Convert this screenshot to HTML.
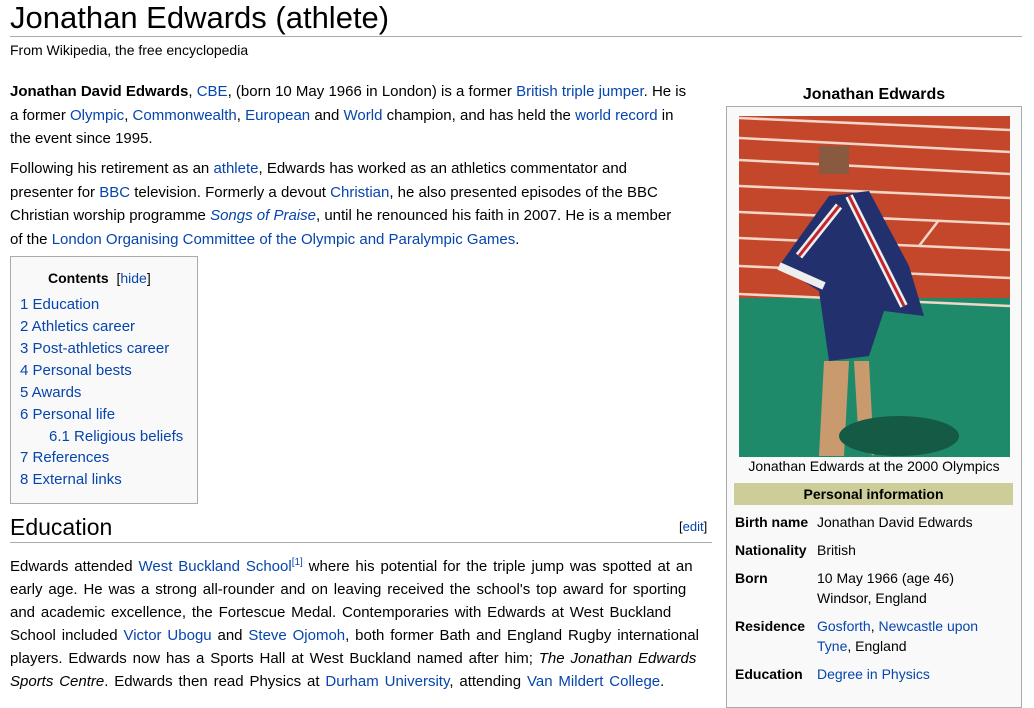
<!DOCTYPE html>
<html><head><meta charset="utf-8"><style>
body{margin:0;background:#fff;font-family:"Liberation Sans",sans-serif;color:#000;width:1034px;height:692px;overflow:hidden;position:relative}
a{color:#0645ad;text-decoration:none}
.abs{position:absolute}
h1{position:absolute;left:10px;top:0;margin:0;font-size:31px;font-weight:normal;line-height:36px;width:1012px;border-bottom:1px solid #aaa}
.sub{left:10px;top:42px;font-size:14px}
.p{position:absolute;left:10px;width:710px;font-size:15px;line-height:23.5px;margin:0;white-space:nowrap}
.toc{left:10px;top:256px;width:186px;height:246px;border:1px solid #aaa;background:#f9f9f9;font-size:15px}
.toc div{position:absolute;line-height:22px}
h2{position:absolute;left:10px;top:512px;margin:0;width:702px;font-size:23px;font-weight:normal;border-bottom:1px solid #aaa;line-height:30px}
.info{left:726px;top:106px;width:294px;height:600px;border:1px solid #aaa;background:#f9f9f9;font-size:14px}
.r{position:absolute;left:8px;line-height:20px}
.r b{display:inline-block;width:82px}
.v{position:absolute;left:90px;line-height:20px}
</style></head><body>
<h1>Jonathan Edwards (athlete)</h1>
<div class="abs sub">From Wikipedia, the free encyclopedia</div>
<p class="p" style="top:80px"><b>Jonathan David Edwards</b>, <a>CBE</a>, (born 10 May 1966 in London) is a former <a>British</a> <a>triple jumper</a>. He is<br>a former <a>Olympic</a>, <a>Commonwealth</a>, <a>European</a> and <a>World</a> champion, and has held the <a>world record</a> in<br>the event since 1995.</p>
<p class="p" style="top:157px">Following his retirement as an <a>athlete</a>, Edwards has worked as an athletics commentator and<br>presenter for <a>BBC</a> television. Formerly a devout <a>Christian</a>, he also presented episodes of the BBC<br>Christian worship programme <i><a>Songs of Praise</a></i>, until he renounced his faith in 2007. He is a member<br>of the <a>London Organising Committee of the Olympic and Paralympic Games</a>.</p>
<div class="abs toc">
<div style="left:37px;top:10px;font-size:14px"><b>Contents</b> &nbsp;[<a>hide</a>]</div>
<div style="left:9px;top:37px"><a>1 Education</a></div>
<div style="left:9px;top:59px"><a>2 Athletics career</a></div>
<div style="left:9px;top:81px"><a>3 Post-athletics career</a></div>
<div style="left:9px;top:103px"><a>4 Personal bests</a></div>
<div style="left:9px;top:125px"><a>5 Awards</a></div>
<div style="left:9px;top:147px"><a>6 Personal life</a></div>
<div style="left:38px;top:169px"><a>6.1 Religious beliefs</a></div>
<div style="left:9px;top:190px"><a>7 References</a></div>
<div style="left:9px;top:212px"><a>8 External links</a></div>
</div>
<h2>Education</h2>
<div class="abs" style="left:679px;top:519px;font-size:13px">[<a>edit</a>]</div>
<p class="p" style="top:555px;line-height:23px;word-spacing:1.7px">Edwards attended <a>West Buckland School</a><sup style="font-size:10px;line-height:0"><a>[1]</a></sup> where his potential for the triple jump was spotted at an<br>early age. He was a strong all-rounder and on leaving received the school's top award for sporting<br>and academic excellence, the Fortescue Medal. Contemporaries with Edwards at West Buckland<br>School included <a>Victor Ubogu</a> and <a>Steve Ojomoh</a>, both former Bath and England Rugby international<br>players. Edwards now has a Sports Hall at West Buckland named after him; <i>The Jonathan Edwards</i><br><i>Sports Centre</i>. Edwards then read Physics at <a>Durham University</a>, attending <a>Van Mildert College</a>.</p>
<div class="abs" style="left:726px;top:86px;width:296px;text-align:center;font-size:16px;font-weight:bold">Jonathan Edwards</div>
<div class="abs info">
<svg class="abs" style="left:12px;top:9px" width="271" height="341" viewBox="0 0 271 341">
<rect width="271" height="341" fill="#c4472c"/>
<rect y="182" width="271" height="159" fill="#1f8a6a"/>
<g stroke="#f2d6c8" stroke-width="2.5"><line x1="0" y1="2" x2="271" y2="14"/><line x1="0" y1="22" x2="271" y2="36"/><line x1="0" y1="44" x2="271" y2="58"/><line x1="0" y1="70" x2="271" y2="82"/><line x1="0" y1="96" x2="271" y2="108"/><line x1="0" y1="122" x2="271" y2="134"/><line x1="0" y1="150" x2="271" y2="162"/><line x1="0" y1="178" x2="271" y2="190"/><line x1="200" y1="104" x2="180" y2="130"/></g>
<rect x="80" y="30" width="30" height="28" fill="#8a5a40"/>
<path d="M40 150 L90 80 L130 75 L170 150 L185 200 L145 195 L130 240 L90 245 L80 175 Z" fill="#22306e"/>
<path d="M60 140 L100 90 M110 80 L165 190 M40 150 L85 170" stroke="#eee" stroke-width="8"/>
<path d="M60 140 L100 90 M110 80 L165 190" stroke="#c0262b" stroke-width="3"/>
<path d="M85 245 L80 340 L105 340 L110 245 Z M115 245 L120 330 L135 340 L130 245 Z" fill="#c99a6e"/>
<ellipse cx="160" cy="320" rx="60" ry="20" fill="#155a45"/>
</svg>
<div class="abs" style="left:0;top:351px;width:294px;text-align:center">Jonathan Edwards at the 2000 Olympics</div>
<div class="abs" style="left:7px;top:376px;width:279px;height:22px;background:#cdcd9a;text-align:center;font-weight:bold;line-height:22px">Personal information</div>
<div class="r" style="top:405px"><b>Birth name</b></div><div class="v" style="top:405px">Jonathan David Edwards</div>
<div class="r" style="top:433px"><b>Nationality</b></div><div class="v" style="top:433px">British</div>
<div class="r" style="top:461px"><b>Born</b></div><div class="v" style="top:461px">10 May 1966 (age 46)<br>Windsor, England</div>
<div class="r" style="top:509px"><b>Residence</b></div><div class="v" style="top:509px"><a>Gosforth</a>, <a>Newcastle upon</a><br><a>Tyne</a>, England</div>
<div class="r" style="top:557px"><b>Education</b></div><div class="v" style="top:557px"><a>Degree in Physics</a></div>
</div>
</body></html>
